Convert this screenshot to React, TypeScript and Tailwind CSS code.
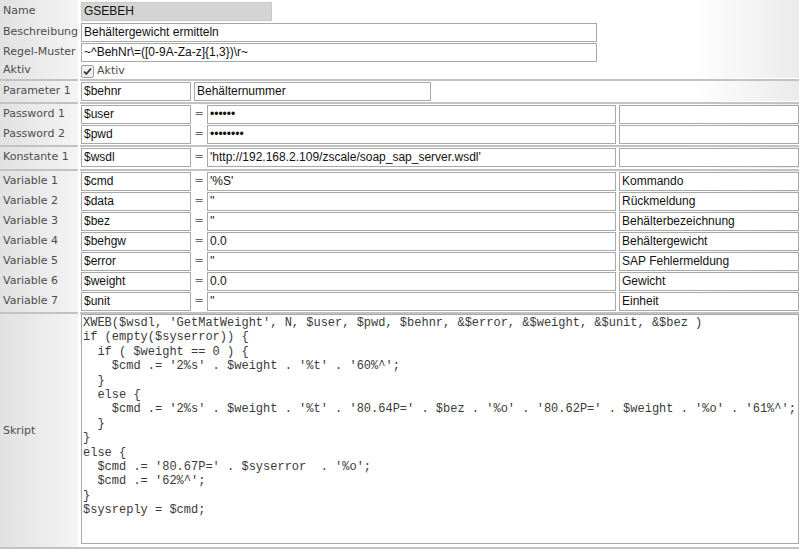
import React from "react";

const label = "font-['DejaVu_Sans',sans-serif] text-[11px] text-[#4d4d4d]";
const box =
  "h-[19px] shrink-0 border px-[2px] font-['Liberation_Sans',Arial,sans-serif] text-[12px] leading-[17px] text-[#111] whitespace-nowrap overflow-hidden";
const field = `${box} border-[#a9a9a9] bg-white`;

function Row({ name, children, h = "h-[20px]" }: { name: string; children?: React.ReactNode; h?: string }) {
  return (
    <div className={`flex ${h}`}>
      <div className={`w-[78px] shrink-0 flex items-center pl-[3px] bg-linear-to-r from-[#e1e1e1] to-[#f4f4f4] ${label}`}>
        {name}
      </div>
      <div className="w-[2px] shrink-0 bg-white" />
      <div className="flex-1 flex items-center pl-[1px] bg-linear-to-r from-white from-85% to-[#ebebeb]">{children}</div>
    </div>
  );
}

function Sep() {
  return (
    <div className="flex h-[3px]">
      <div className="w-[78px] bg-linear-to-r from-[#e1e1e1] to-[#f4f4f4] flex flex-col justify-center">
        <div className="h-[2px] bg-[#c2c2c2]" />
      </div>
      <div className="w-[2px] bg-white" />
      <div className="flex-1 flex flex-col justify-center">
        <div className="h-[2px] bg-[#c2c2c2]" />
      </div>
    </div>
  );
}

function Assign({ name, value, note = "" }: { name: string; value: string; note?: string }) {
  return (
    <>
      <div className={`${field} w-[110px]`}>{name}</div>
      <div className={`w-[16px] text-center ${label} text-[#666]`}>=</div>
      <div className={`${field} w-[409px]`}>{value}</div>
      <div className="w-[3px]" />
      <div className={`${field} flex-1`}>{note}</div>
    </>
  );
}

const vars = [
  ["$cmd", "'%S'", "Kommando"],
  ["$data", "''", "Rückmeldung"],
  ["$bez", "''", "Behälterbezeichnung"],
  ["$behgw", "0.0", "Behältergewicht"],
  ["$error", "''", "SAP Fehlermeldung"],
  ["$weight", "0.0", "Gewicht"],
  ["$unit", "''", "Einheit"],
];

const script = `XWEB($wsdl, 'GetMatWeight', N, $user, $pwd, $behnr, &$error, &$weight, &$unit, &$bez )
if (empty($syserror)) {
  if ( $weight == 0 ) {
    $cmd .= '2%s' . $weight . '%t' . '60%^';
  }
  else {
    $cmd .= '2%s' . $weight . '%t' . '80.64P=' . $bez . '%o' . '80.62P=' . $weight . '%o' . '61%^';
  }
}
else {
  $cmd .= '80.67P=' . $syserror  . '%o';
  $cmd .= '62%^';
}
$sysreply = $cmd;`;

export default function App() {
  return (
    <div className="w-[799px] h-[549px] overflow-hidden bg-white flex flex-col">
      <Row name="Name" h="h-[22px]">
        <div className={`${box} w-[191px] bg-[#d4d4d4] border-[#c8c8c8] mt-[1px]`}>GSEBEH</div>
      </Row>
      <Row name="Beschreibung">
        <div className={`${field} w-[516px]`}>Behältergewicht ermitteln</div>
      </Row>
      <Row name="Regel-Muster">
        <div className={`${field} w-[516px]`}>~^BehNr\=([0-9A-Za-z]{"{"}1,3{"}"})\r~</div>
      </Row>
      <Row name="Aktiv" h="h-[16px]">
        <div className="flex items-center gap-[3px] pt-[2px]">
          <svg width="13" height="13" viewBox="0 0 13 13">
            <rect x="0.5" y="0.5" width="12" height="12" rx="1.5" fill="#f0f0f0" stroke="#a0a0a0" />
            <path d="M3 6.5 L5.3 9 L10 3.5" fill="none" stroke="#333" strokeWidth="1.8" />
          </svg>
          <span className={label}>Aktiv</span>
        </div>
      </Row>
      <Sep />
      <Row name="Parameter 1">
        <div className={`${field} w-[110px]`}>$behnr</div>
        <div className="w-[3px]" />
        <div className={`${field} w-[237px]`}>Behälternummer</div>
      </Row>
      <Sep />
      <Row name="Password 1">
        <Assign name="$user" value="••••••" />
      </Row>
      <Row name="Password 2">
        <Assign name="$pwd" value="••••••••" />
      </Row>
      <Sep />
      <Row name="Konstante 1" h="h-[21px]">
        <Assign name="$wsdl" value="'http://192.168.2.109/zscale/soap_sap_server.wsdl'" />
      </Row>
      <Sep />
      {vars.map(([n, v, c], i) => (
        <Row key={n} name={`Variable ${i + 1}`}>
          <Assign name={n} value={v} note={c} />
        </Row>
      ))}
      <Sep />
      <div className="flex flex-1">
        <div className={`w-[78px] shrink-0 flex items-center pl-[3px] pt-[2px] bg-linear-to-r from-[#e1e1e1] to-[#f4f4f4] ${label}`}>
          Skript
        </div>
        <div className="w-[2px] shrink-0 bg-white" />
        <div className="flex-1 pl-[1px] pb-[3px] flex">
          <div className="flex-1 border border-[#a9a9a9] bg-white pl-[1px] pt-[1px] font-['Liberation_Mono','Courier_New',monospace] text-[12px] leading-[14.4px] text-[#3a3a3a] whitespace-pre overflow-hidden">
            {script}
          </div>
        </div>
      </div>
      <div className="h-[2px] bg-[#c2c2c2]" />
    </div>
  );
}
